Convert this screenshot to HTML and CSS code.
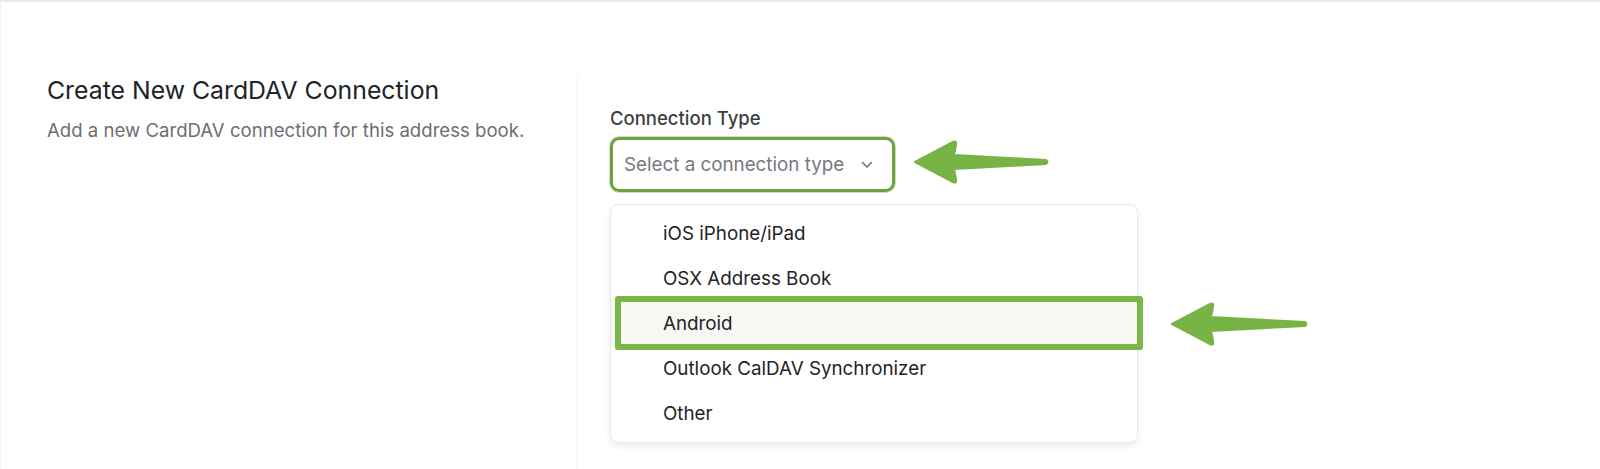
FILE: index.html
```html
<!DOCTYPE html>
<html lang="en">
<head>
<meta charset="utf-8">
<title>Create New CardDAV Connection</title>
<link rel="stylesheet" href="styles.css">
</head>
<body>
<div class="page">
  <section class="intro">
    <h2 class="title">Create New CardDAV Connection</h2>
    <p class="subtitle">Add a new CardDAV connection for this address book.</p>
  </section>
  <section class="form">
    <label class="label">Connection Type</label>
    <div class="select-row">
      <div class="select">
        <span class="placeholder">Select a connection type</span>
        <svg class="chevron" width="12" height="8" viewBox="0 0 12 8"><path d="M1.5 1.5 L6 6 L10.5 1.5" fill="none" stroke="#6b7280" stroke-width="1.6" stroke-linecap="round" stroke-linejoin="round"/></svg>
      </div>
      <svg class="arrow arrow-select" width="140" height="46" viewBox="0 0 140 46"><path d="M3,23 L41,3 Q45,1 44,6 L42,16 L134,21 Q137,23 134,25 L42,30 L44,40 Q45,45 41,43 Z" fill="#78b345" stroke="#78b345" stroke-width="2" stroke-linejoin="round"/></svg>
    </div>
    <ul class="menu">
      <li class="item">iOS iPhone/iPad</li>
      <li class="item">OSX Address Book</li>
      <li class="item item-active">Android
        <span class="highlight"></span>
        <svg class="arrow arrow-item" width="142" height="46" viewBox="0 0 142 46"><path d="M3,23 L41,3 Q45,1 44,6 L42,16 L136,21 Q139,23 136,25 L42,30 L44,40 Q45,45 41,43 Z" fill="#78b345" stroke="#78b345" stroke-width="2" stroke-linejoin="round"/></svg>
      </li>
      <li class="item">Outlook CalDAV Synchronizer</li>
      <li class="item">Other</li>
    </ul>
  </section>
</div>
</body>
</html>
```

FILE: styles.css
```css
* { box-sizing: border-box; }
html, body { margin: 0; padding: 0; background: #ffffff; }
body {
  font-family: Inter, "Noto Sans", "Liberation Sans", sans-serif;
  color: #1f2328;
  width: 1600px;
  height: 469px;
  overflow: hidden;
}
.page {
  height: 469px;
  border-top: 2px solid #e9eaeb;
  border-left: 1px solid #f1f2f3;
  display: grid;
  grid-template-columns: 576px 1fr;
  padding-top: 72px;
}
.intro {
  padding-left: 46px;
  padding-top: 1px;
}
.title {
  margin: 0;
  font-size: 24.8px;
  line-height: 30px;
  font-weight: 400;
  color: #202327;
  letter-spacing: 0;
}
.subtitle {
  margin: 12px 0 0;
  font-size: 18.6px;
  line-height: 26px;
  color: #6b6f75;
}
.form {
  border-left: 1px solid #f0f1f2;
  padding-left: 32px;
  padding-top: 31px;
}
.label {
  display: block;
  font-size: 18.5px;
  line-height: 26px;
  color: #3b3f45;
  font-weight: 450;
}
.select-row {
  position: relative;
  margin-top: 6px;
  width: 285px;
}
.select {
  height: 55px;
  width: 285px;
  border: 3px solid #6da140;
  border-radius: 9px;
  display: flex;
  align-items: center;
  justify-content: space-between;
  padding: 0 19px 0 11px;
  box-shadow: 0 0 0 1px rgba(109,161,64,0.35);
}
.placeholder {
  font-size: 18.8px;
  color: #75797f;
}
.chevron { display: block; }
.arrow { position: absolute; display: block; }
.arrow-select { left: 302px; top: 2px; }
.menu {
  list-style: none;
  margin: 12px 0 0;
  padding: 6px 0;
  width: 528px;
  border: 1px solid #e8e9eb;
  border-radius: 8px;
  box-shadow: 0 3px 6px rgba(0,0,0,0.08);
  background: #fff;
}
.item {
  position: relative;
  height: 45px;
  display: flex;
  align-items: center;
  padding-left: 52px;
  font-size: 18.8px;
  color: #1f2328;
}
.item-active { background: #f7f7f3; }
.highlight {
  position: absolute;
  left: 4px;
  right: -6px;
  top: -5px;
  bottom: -4px;
  border: 6px solid #7ab648;
  border-radius: 3px;
  pointer-events: none;
}
.arrow-item { left: 558px; top: 0px; }
```
